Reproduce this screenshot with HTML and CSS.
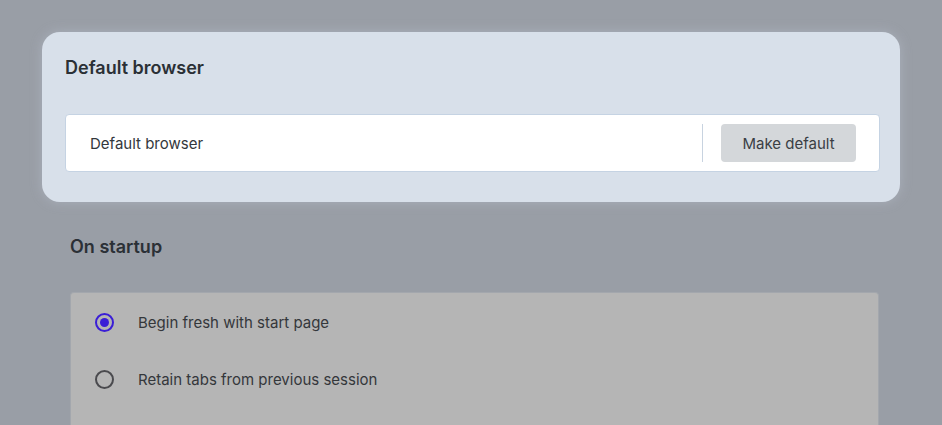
FILE: index.html
```html
<!DOCTYPE html>
<html lang="en">
<head>
<meta charset="UTF-8">
<meta name="viewport" content="width=device-width, initial-scale=1.0">
<title>Settings</title>
<link rel="stylesheet" href="styles.css">
</head>
<body>

<div class="page">
    <div class="highlight-card">
        <h2 class="section-title">Default browser</h2>
        <div class="row-box">
            <span class="row-label">Default browser</span>
            <div class="row-divider"></div>
            <button class="make-default">Make default</button>
        </div>
    </div>

    <div class="section">
        <h2 class="section-title">On startup</h2>
        <div class="options-box">
            <div class="option">
                <span class="radio checked"></span>
                <span class="option-label">Begin fresh with start page</span>
            </div>
            <div class="option">
                <span class="radio"></span>
                <span class="option-label">Retain tabs from previous session</span>
            </div>
        </div>
    </div>
</div>

</body>
</html>
```

FILE: styles.css
```css
body {
    margin: 0;
    padding: 0;
    background-color: #999ea6;
    font-family: Inter, "Noto Sans", sans-serif;
    color: #2d3136;
    overflow: hidden;
}

.page {
    padding: 32px 42px 0 42px;
}

.highlight-card {
    background-color: #d8e0ea;
    border-radius: 18px;
    padding: 24px 20px 30px 23px;
    box-shadow: 0 0 12px rgba(200, 210, 225, 0.35);
}

.section-title {
    margin: 0;
    font-size: 18px;
    font-weight: 600;
    line-height: 24px;
    color: #2b3036;
}

.row-box {
    margin-top: 34px;
    background-color: #ffffff;
    border: 1px solid #c5d3e3;
    border-radius: 4px;
    height: 56px;
    display: flex;
    align-items: center;
    padding: 0 23px 0 24px;
}

.row-label {
    flex: 1;
    font-size: 15px;
    color: #33373c;
}

.row-divider {
    width: 1px;
    height: 38px;
    background-color: #c8d3e0;
    margin-right: 18px;
}

.make-default {
    width: 135px;
    height: 38px;
    border: none;
    border-radius: 4px;
    background-color: #d4d7da;
    color: #3a3e44;
    font-family: Inter, "Noto Sans", sans-serif;
    font-size: 15px;
    cursor: pointer;
}

.section {
    padding: 33px 21px 0 28px;
}

.options-box {
    margin-top: 33px;
    background-color: #b5b5b5;
    border: 1px solid #a3a7ad;
    border-bottom: none;
    border-radius: 4px 4px 0 0;
    padding-top: 1px;
    height: 132px;
}

.option {
    display: flex;
    align-items: center;
    height: 57px;
    padding-left: 24px;
}

.radio {
    width: 15px;
    height: 15px;
    border: 2.5px solid #4a4a4e;
    border-radius: 50%;
    margin-right: 24px;
    position: relative;
    flex-shrink: 0;
}

.radio.checked {
    border-color: #3a1ed6;
}

.radio.checked::after {
    content: "";
    position: absolute;
    top: 3px;
    left: 3px;
    width: 9px;
    height: 9px;
    border-radius: 50%;
    background-color: #3a1ed6;
}

.option-label {
    font-size: 15px;
    color: #34373b;
}
```
